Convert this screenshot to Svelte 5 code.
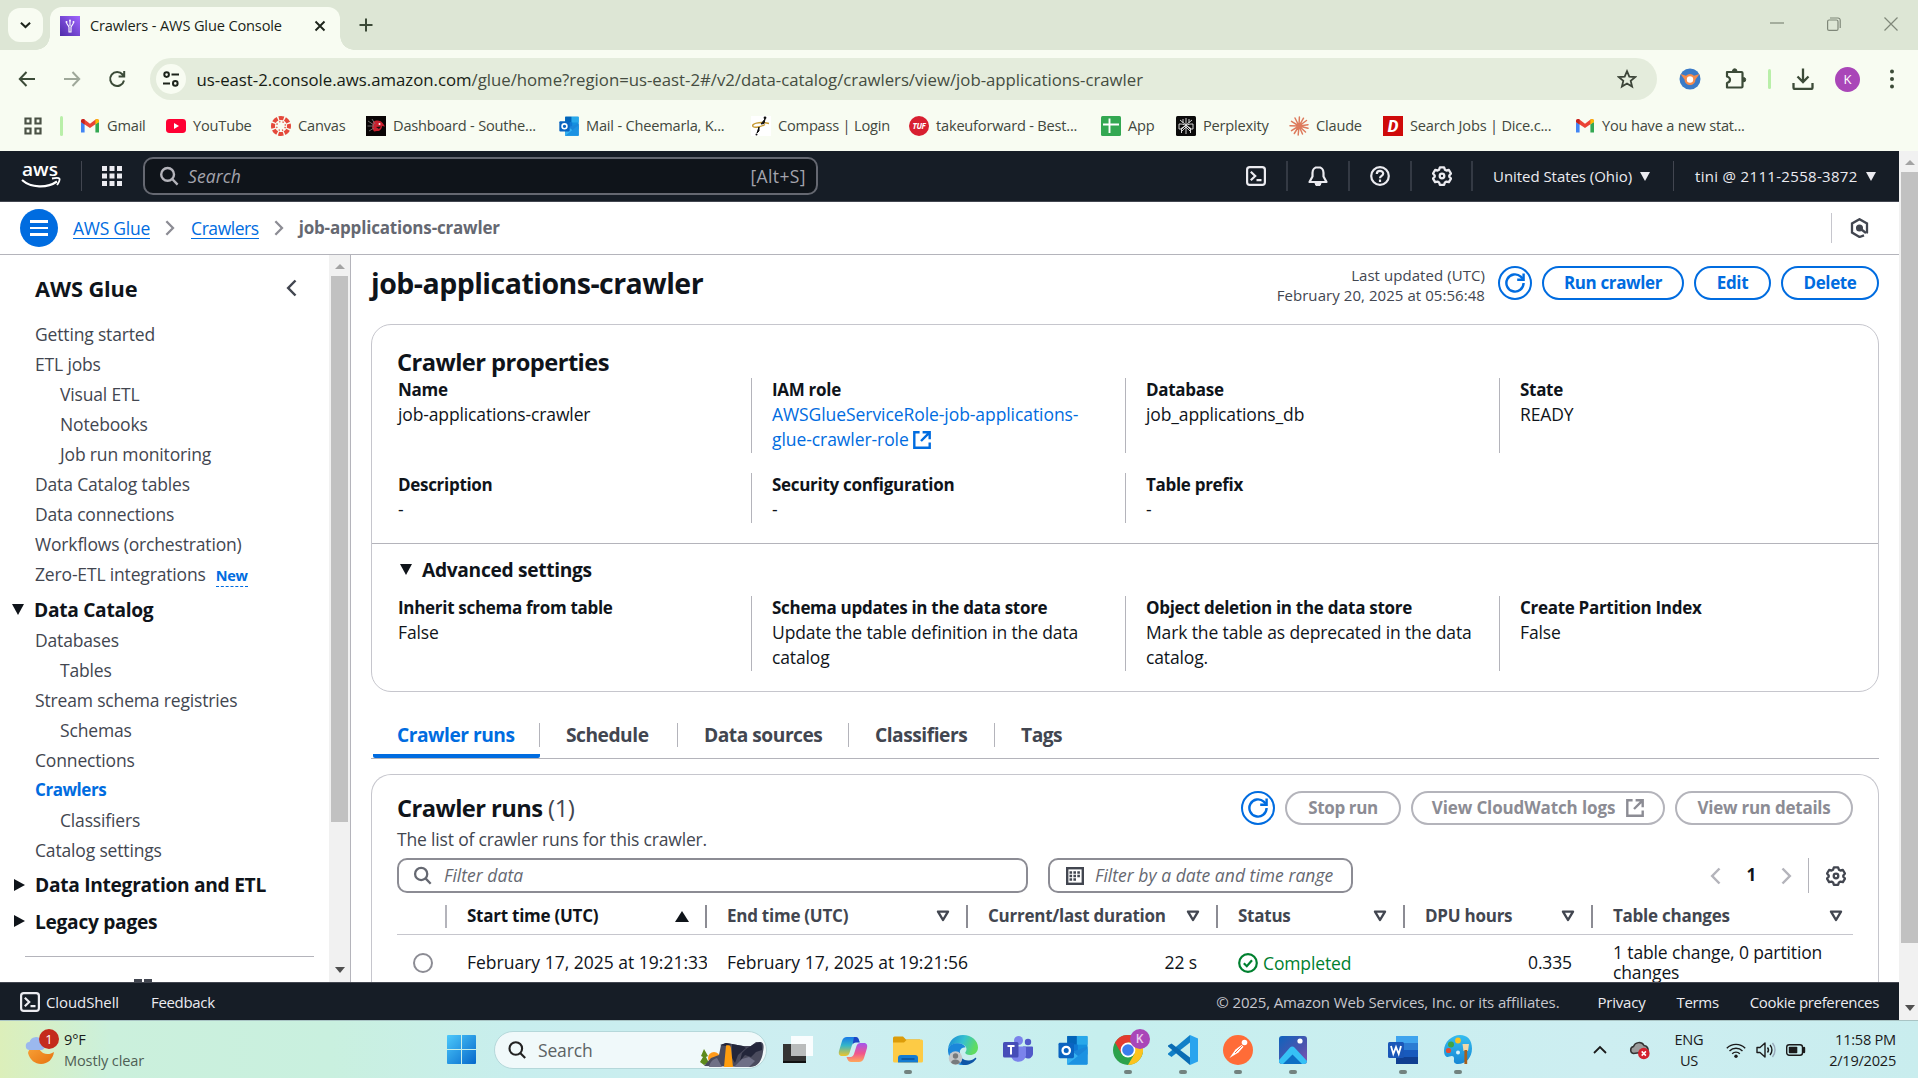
<script>
  const bookmarks = [
    { icon: 'gmail', label: 'Gmail' },
    { icon: 'youtube', label: 'YouTube' },
    { icon: 'canvas', label: 'Canvas' },
    { icon: 'dashboard', label: 'Dashboard - Southe...' },
    { icon: 'outlook', label: 'Mail - Cheemarla, K...' },
    { icon: 'compass', label: 'Compass | Login' },
    { icon: 'tuf', label: 'takeuforward - Best...' },
    { icon: 'app', label: 'App' },
    { icon: 'perplexity', label: 'Perplexity' },
    { icon: 'claude', label: 'Claude' },
    { icon: 'dice', label: 'Search Jobs | Dice.c...' },
    { icon: 'gmail', label: 'You have a new stat...' }
  ];

  const topLinks = [
    { label: 'Getting started' },
    { label: 'ETL jobs' },
    { label: 'Visual ETL', sub: true },
    { label: 'Notebooks', sub: true },
    { label: 'Job run monitoring', sub: true },
    { label: 'Data Catalog tables' },
    { label: 'Data connections' },
    { label: 'Workflows (orchestration)' },
    { label: 'Zero-ETL integrations', badge: 'New' }
  ];
  const catalogLinks = [
    { label: 'Databases' },
    { label: 'Tables', sub: true },
    { label: 'Stream schema registries' },
    { label: 'Schemas', sub: true },
    { label: 'Connections' },
    { label: 'Crawlers', active: true },
    { label: 'Classifiers', sub: true },
    { label: 'Catalog settings' }
  ];

  const advanced = [
    { label: 'Inherit schema from table', value: 'False' },
    { label: 'Schema updates in the data store', value: 'Update the table definition in the data catalog' },
    { label: 'Object deletion in the data store', value: 'Mark the table as deprecated in the data catalog.' },
    { label: 'Create Partition Index', value: 'False' }
  ];

  const tabs = ['Crawler runs', 'Schedule', 'Data sources', 'Classifiers', 'Tags'];
  const columns = ['Start time (UTC)', 'End time (UTC)', 'Current/last duration', 'Status', 'DPU hours', 'Table changes'];
  const apps = [
    { icon: 'taskview' },
    { icon: 'copilot' },
    { icon: 'explorer', open: true },
    { icon: 'edge' },
    { icon: 'teams' },
    { icon: 'outlook' },
    { icon: 'chrome', open: true },
    { icon: 'vscode', open: true },
    { icon: 'postman', open: true },
    { icon: 'photos', open: true },
    { icon: 'none' },
    { icon: 'word', open: true },
    { icon: 'paint', open: true }
  ];
</script>

{#snippet search()}
  <svg class="i20" viewBox="0 0 20 20" fill="none" stroke="currentColor" stroke-width="2.4"><circle cx="8.6" cy="8.4" r="6.4" /><path d="M13.2 13l5.4 5.6" /></svg>
{/snippet}

{#snippet refresh()}
  <svg class="i20" viewBox="0 0 20 20" fill="none" stroke="currentColor" stroke-width="2.4"><path d="M18.6 10a8.6 8.6 0 1 1-2.8-6.4l2 2.2" /><path d="M18.6 .6v6.2h-6.4" /></svg>
{/snippet}

{#snippet external()}
  <svg class="i18" viewBox="0 0 18 18" fill="none" stroke="currentColor" stroke-width="2.4"><path d="M6.6 1.3H1.3v15.4h15.4v-5.2" /><path d="M9.6 1.3h7.1v7M16.4 1.6L8 10" /></svg>
{/snippet}

{#snippet gear()}
  <svg class="i20" viewBox="0 0 20 20" fill="none" stroke="currentColor" stroke-width="2.3" stroke-linejoin="round"><path d="M7.9 1.3h4.2l.8 2.4 1.5.8 2.5-.5 2.1 3.5-1.7 1.9v1.3l1.7 1.9-2.1 3.5-2.5-.5-1.5.8-.8 2.4H7.900l-.8-2.400-1.500-.8-2.500.5L1 12.600l1.700-1.900V9.400L1 7.500 3.100 4l2.500.5 1.500-.8z" /><circle cx="10" cy="10" r="2.300" /></svg>
{/snippet}

{#snippet shell()}
  <svg class="i20" viewBox="0 0 20 20" fill="none" stroke="currentColor" stroke-width="2.2"><rect x="1.1" y="1.1" width="17.8" height="17.8" rx="2.600" /><path d="M4.800 5.800l4.400 4.200-4.400 4.200M10.500 14.200h5" /></svg>
{/snippet}

{#snippet chevron(dir)}
  <svg class="chev {dir}" viewBox="0 0 11 18" fill="none" stroke="currentColor" stroke-width="2.500"><path d="M1.500 1.500L8.800 9l-7.300 7.500" /></svg>
{/snippet}

{#snippet sort()}
  <svg class="sort" viewBox="0 0 14 12" fill="none" stroke="currentColor" stroke-width="2.400" stroke-linejoin="round"><path d="M2 1.600h10L7 10z" /></svg>
{/snippet}

{#snippet outlook()}
  <rect x="9" y="1" width="21" height="20" rx="1.500" fill="#1490df" /><path d="M9 1h10v9H9z" fill="#0364b8" /><path d="M19 1h11v9H19z" fill="#28a8ea" /><path d="M9 10h11v9H9z" fill="#0f78d4" /><path d="M9 19l21-7v17.500a1 1 0 0 1-1 1H10a1 1 0 0 1-1-1z" fill="#1a86d9" /><path d="M9 13l21 16.500a1 1 0 0 1-1 1H9z" fill="#35b1f1" /><path d="M9 30.500L30 14v15.500a1 1 0 0 1-1 1z" fill="#1c92e2" /><rect x="0" y="8" width="16" height="16" rx="1.500" fill="#0a63c0" /><circle cx="8" cy="16" r="3.800" fill="none" stroke="#fff" stroke-width="2.400" />
{/snippet}

{#snippet bookmarkIcon(name)}
  {#if name === 'gmail'}
    <svg class="i20" viewBox="0 0 20 20"><path d="M1 6v10.500h3.600V8z" fill="#4285f4" /><path d="M19 6v10.500h-3.600V8z" fill="#34a853" /><path d="M1 5.200C1 3 3.300 2.500 4.800 3.700L10 7.700V12L1 5.900z" fill="#ea4335" /><path d="M19 5.200c0-2.200-2.300-2.700-3.800-1.500L10 7.700V12l5.400-3.800z" fill="#ea4335" /><path d="M15.400 3.600c1.600-1.100 3.600-.4 3.600 1.600V6l-3.600 2.600z" fill="#fbbc04" /><path d="M1 5.900l3.600 2.600v-5C3 2.500 1 3.400 1 5.200z" fill="#c5221f" /></svg>
  {:else if name === 'youtube'}
    <svg class="i20" viewBox="0 0 20 20"><rect y="3" width="20" height="14" rx="3.400" fill="#f03" /><path d="M8 7v6l5-3z" fill="#fff" /></svg>
  {:else if name === 'canvas'}
    <svg class="i20" viewBox="0 0 20 20"><circle cx="10" cy="10" r="8" fill="none" stroke="#e4493b" stroke-width="4" stroke-dasharray="4.900 1.383" stroke-dashoffset="2.400" /><circle cx="10" cy="10" r="4.400" fill="none" stroke="#e4493b" stroke-width="1.300" stroke-dasharray="1.300 2.156" stroke-dashoffset="-1" /></svg>
  {:else if name === 'dashboard'}
    <svg class="i20" viewBox="0 0 20 20"><rect width="20" height="20" fill="#0a0506" /><path d="M7 6c4-2.500 8-1.500 10 1.500l2 3-3-.5c0 3-2.500 5.500-5 5l-3 .5L6 12z" fill="#c8202f" /><path d="M2 5l6 4M1.500 10H8M3 15l5-3M6 3l3 5" stroke="#777" stroke-width=".9" /><circle cx="13.500" cy="8" r="1" fill="#fff" /><path d="M10 11l5-.5-2 2.500z" fill="#111" /></svg>
  {:else if name === 'outlook'}
    <svg class="i20" viewBox="0 0 30 31">{@render outlook()}</svg>
  {:else if name === 'compass'}
    <svg class="i20" viewBox="0 0 20 20"><rect width="20" height="20" fill="#fff" /><path d="M18 7.500C8 5 0 8 2 10.500c2 1.500 8 .5 12-2" fill="none" stroke="#c79a33" stroke-width="1.400" /><path d="M14 3l-4 5 3-.5zM8 11l-2 6 2-2z" fill="#111" stroke="#111" /><circle cx="14" cy="1.800" r="1.400" fill="#111" /><circle cx="5.500" cy="18.500" r="1" fill="#111" /></svg>
  {:else if name === 'tuf'}
    <span class="tuf">TUF</span>
  {:else if name === 'app'}
    <svg class="i20" viewBox="0 0 20 20"><rect width="20" height="20" rx="1.500" fill="#33a852" /><path d="M8.500 2.500v14.500M2 8.500h16" stroke="#fff" stroke-width="1.900" /></svg>
  {:else if name === 'perplexity'}
    <svg class="i20" viewBox="0 0 20 20" fill="none" stroke="#e8e8e8" stroke-width=".9"><rect width="20" height="20" rx="1.500" fill="#0b0b0b" stroke="none" /><path d="M10 2v16M4 4l6 5 6-5M3 8c3 0 5 0 7 2 2-2 4-2 7-2M3 8v5h3l4-4 4 4h3V8M5.500 17v-5l4.500-2.500 4.500 2.500v5M7 3v4M13 3v4M10 11l-4 4M10 11l4 4" /></svg>
  {:else if name === 'claude'}
    <svg class="i20" viewBox="0 0 20 20" stroke="#dd7a5c" stroke-width="1.500" stroke-linecap="round"><path d="M10 10L10.400 1M10 10L14.500 2.200M10 10L17.500 4.500M10 10L19 8.700M10 10l9 2.300M10 10l6.500 6M10 10l3.500 8M10 10l-.8 9M10 10l-4.700 7.500M10 10l-7.500 4.700M10 10l-9-.3M10 10L2.500 5.300M10 10L6 2" /></svg>
  {:else if name === 'dice'}
    <span class="dice">D</span>
  {/if}
{/snippet}

{#snippet appIcon(name)}
  {#if name === 'taskview'}
    <svg class="i30" viewBox="0 0 30 30"><rect x="0" y="9" width="23" height="19" fill="#343434" /><path d="M0 26h23v2H0z" fill="#111" /><rect x="8" y="1" width="22" height="20" fill="#fff" fill-opacity=".88" /><path d="M8 9h15v12H8z" fill="#b9bcbc" /></svg>
  {:else if name === 'copilot'}
    <svg class="i30" viewBox="0 0 30 30"><defs><linearGradient id="cp1" x1="0" y1="0" x2="0" y2="1"><stop offset="0" stop-color="#1779e8" /><stop offset=".45" stop-color="#35b6c8" /><stop offset="1" stop-color="#f0c52a" /></linearGradient><linearGradient id="cp2" x1="0" y1="0" x2="0" y2="1"><stop offset="0" stop-color="#a355ee" /><stop offset=".55" stop-color="#f0568c" /><stop offset="1" stop-color="#ffa85a" /></linearGradient></defs><path d="M9 2h8c3 0 3.500 3 4.500 5h-4c-2 0-3 1.500-3.500 3l-2.500 8c-.6 2-2 3-4 3H4c-3 0-3.600-2.500-3-5L4 6c.8-2.600 2.500-4 5-4z" fill="url(#cp1)" /><path d="M21 27h-8c-3 0-3.500-3-4.500-5h4c2 0 3-1.500 3.500-3l2.500-8c.6-2 2-3 4-3H26c3 0 3.600 2.500 3 5l-3 10c-.8 2.600-2.500 4-5 4z" fill="url(#cp2)" /><path d="M16 2h2c2.500 0 3 3 3.800 5.600H18c-2 0-3 1-3.500 2.500z" fill="#1b45c4" /></svg>
  {:else if name === 'explorer'}
    <svg class="i30" viewBox="0 0 30 30"><path d="M0 3a1.500 1.500 0 0 1 1.500-1.500H10l3 3h14V12H0z" fill="#dc9c0a" /><path d="M0 7.500h11l3-3h14.500A1.500 1.500 0 0 1 30 6v20a1.500 1.500 0 0 1-1.500 1.500h-27A1.500 1.500 0 0 1 0 26z" fill="#fdcb45" /><path d="M5 27.500V23a3 3 0 0 1 3-3h14a3 3 0 0 1 3 3v4.500z" fill="#147bd1" /><path d="M8.500 24h13" stroke="#0a4f94" stroke-width="1.500" /></svg>
  {:else if name === 'edge'}
    <svg class="i30" viewBox="0 0 30 30"><defs><linearGradient id="eg" x1="0" y1="0" x2="1" y2=".3"><stop offset="0" stop-color="#1683d8" /><stop offset=".55" stop-color="#36c1cf" /><stop offset="1" stop-color="#5fdc61" /></linearGradient></defs><path d="M0 14C1 5.500 7 0 15 0c9 0 15 6 15 12.500 0 5-4 7.500-8 7.500-3 0-4.800-1-4.800-2.200 0-.8 1.300-1.500 1.300-3.800 0-3-3.500-5.500-7.500-5.500C5 8.500 1 10.500 0 14z" fill="url(#eg)" /><path d="M0 14C1.500 9.800 5.500 8.300 10 8.300c4 0 6.500 2 7.500 4-5 0-7 4.700-5.500 9 1.500 4 4 6.700 8 7.900A15 15 0 0 1 0 14z" fill="#1b87da" /><path d="M12 16c-1.500 6 3.500 10 9 9.500 2.500-.2 4.500-1.200 6-2.500 1-.8 1.700 0 1 1.200A15 15 0 0 1 15 30C10 27 8 20 12 16z" fill="#0f55a6" /><circle cx="7.500" cy="23" r="6.800" fill="#c3c7ca" /><circle cx="7.500" cy="21" r="2.700" fill="#777a7c" /><path d="M3 27.500c.8-4 8-4 9 0-2 2.500-7 2.500-9 0z" fill="#777a7c" /></svg>
  {:else if name === 'teams'}
    <svg class="i30" viewBox="0 0 30 30"><circle cx="25" cy="7" r="3.200" fill="#5059c9" /><path d="M20 11.500h9a1 1 0 0 1 1 1V18a5 5 0 0 1-8 4.500z" fill="#5059c9" /><circle cx="15.500" cy="5.500" r="4.500" fill="#7b83eb" /><path d="M9 11.500h13a1 1 0 0 1 1 1v8A7.700 7.700 0 0 1 8 21z" fill="#7b83eb" /><rect y="7" width="15.500" height="15.500" rx="1.500" fill="#464eb8" /><path d="M4.500 11h7M8 11v8.500" stroke="#fff" stroke-width="2" /></svg>
  {:else if name === 'outlook'}
    <svg class="i30" viewBox="0 0 30 31">{@render outlook()}</svg>
  {:else if name === 'chrome'}
    <span class="badged">
      <svg class="i30" viewBox="0 0 30 30"><circle cx="15" cy="15" r="15" fill="#2ba24c" /><path d="M2 7.500A15 15 0 0 1 28 7.500H15l-6.500 11.200z" fill="#e33b2e" /><path d="M28 7.500A15 15 0 0 1 15 30l6.500-11.200L15 7.500z" fill="#fcc31e" /><circle cx="15" cy="15" r="7.400" fill="#fff" /><circle cx="15" cy="15" r="5.800" fill="#3b7ded" /></svg>
      <span class="kbadge">K</span>
    </span>
  {:else if name === 'vscode'}
    <svg class="i30" viewBox="0 0 30 30"><path d="M22 7.500L3.500 22 0 19.500v-1L22 0z" fill="#1180c8" /><path d="M22 22.500L3.500 8.500 0 10.500v1L22 30z" fill="#0a6cb4" /><path d="M22 0l8 3.500v23L22 30z" fill="#2aa4ee" /></svg>
  {:else if name === 'postman'}
    <svg class="i30" viewBox="0 0 30 30"><circle cx="15" cy="15" r="15" fill="#ff6c37" /><path d="M6.500 23l6-8.500 6-4.500 2 1.800-5 5.700z" fill="#fff" /><circle cx="21.500" cy="7.500" r="2.800" fill="#fff" /><path d="M12 18l7-7" stroke="#ff6c37" /></svg>
  {:else if name === 'photos'}
    <svg class="i28" viewBox="0 0 28 28"><defs><linearGradient id="ph" x1="0" y1="0" x2="1" y2="1"><stop offset="0" stop-color="#0f63bd" /><stop offset=".6" stop-color="#4b55ae" /><stop offset="1" stop-color="#8454b5" /></linearGradient></defs><rect width="28" height="28" rx="3" fill="url(#ph)" /><path d="M0 24l11-12.500a3 3 0 0 1 4.500 0L28 25a3 3 0 0 1-3 3H3a3 3 0 0 1-3-4z" fill="#36c1f5" /><path d="M4 28l9.500-9.500L23 28z" fill="#0d6fc4" /><circle cx="21" cy="5" r="2.600" fill="#fff" /></svg>
  {:else if name === 'word'}
    <svg class="i30" viewBox="0 0 30 30"><path d="M8 1h22v7.500H8z" fill="#3fa4ee" /><path d="M8 8h22v7.500H8z" fill="#2b7cd3" /><path d="M8 15h22v7H8z" fill="#185abd" /><path d="M8 22h22v7H8z" fill="#103f91" /><rect y="7" width="16" height="16" rx="1.500" fill="#1a57b8" /><path d="M3 11l2.300 8L8 12l2.700 7L13 11" fill="none" stroke="#fff" stroke-width="1.800" /></svg>
  {:else if name === 'paint'}
    <svg class="i30" viewBox="0 0 30 30"><defs><linearGradient id="pa" x1="0" y1="0" x2="0" y2="1"><stop offset="0" stop-color="#35bdf0" /><stop offset="1" stop-color="#1787d4" /></linearGradient></defs><path d="M17 0C9 0 1 7 1 15.500c0 5.500 2.500 7.500 5.500 6 2.500-1.300 5-.5 4.500 3-.6 3 1 4.500 4 4.500 8 0 14-6.500 14-15.500C29 5 24.500 0 17 0z" fill="url(#pa)" /><circle cx="8" cy="9.500" r="3" fill="#3fa445" /><circle cx="15" cy="5.500" r="2.900" fill="#f6c324" /><circle cx="5.500" cy="15.500" r="2.600" fill="#e54b31" /><circle cx="15" cy="17.500" r="2" fill="#d6f2fa" /><path d="M19.500 9h6.500l-1 7h-4.500z" fill="#f0d7a8" /><path d="M22.800 15v14" stroke="#a7601c" stroke-width="2.800" /></svg>
  {/if}
{/snippet}

<div class="screen">
  <div class="strip">
    <div class="tabsearch"><svg viewBox="0 0 12 8" class="tiny" fill="none" stroke="#1d241b" stroke-width="2.200"><path d="M1 1.500l5 4.700 5-4.700" /></svg></div>
    <div class="browser-tab">
      <svg class="i20" viewBox="0 0 20 20"><defs><linearGradient id="gl" x1="0" y1="1" x2="1" y2="0"><stop offset="0" stop-color="#4d2aa8" /><stop offset="1" stop-color="#a166ff" /></linearGradient></defs><rect width="20" height="20" fill="url(#gl)" /><path d="M6.500 7l2.500 4v5h2v-5l2.500-4M10 5v5" fill="none" stroke="#fff" stroke-width="1.100" /><circle cx="6.500" cy="6" r="1" fill="#fff" /><circle cx="13.500" cy="6" r="1" fill="#fff" /><circle cx="10" cy="4.500" r=".9" fill="#fff" /></svg>
      <span class="tab-title">Crawlers - AWS Glue Console</span>
      <svg class="x" viewBox="0 0 12 12" stroke="#1d241b" stroke-width="1.900"><path d="M1.500 1.500l9 9M10.500 1.500l-9 9" /></svg>
    </div>
    <svg class="plus" viewBox="0 0 14 14" stroke="#3c4a38" stroke-width="2"><path d="M7 .5v13M.5 7h13" /></svg>
    <div class="winbtns">
      <svg viewBox="0 0 14 14" fill="none" stroke="#7f8779" stroke-width="1.200"><path d="M0 6h14" /></svg>
      <svg viewBox="0 0 14 14" fill="none" stroke="#7f8779" stroke-width="1.200"><rect x=".6" y="3" width="10.400" height="10.400" rx="1.500" /><path d="M3 1h8a2.200 2.200 0 0 1 2.200 2.200V11" /></svg>
      <svg viewBox="0 0 14 14" fill="none" stroke="#7f8779" stroke-width="1.200"><path d="M.5.500l13 13M13.500.500l-13 13" /></svg>
    </div>
  </div>

  <div class="toolbar">
    <div class="nav">
      <svg viewBox="0 0 18 18" fill="none" stroke="#3c4b38" stroke-width="2"><path d="M17 9H2M8.500 2L1.800 9l6.700 7" /></svg>
      <svg viewBox="0 0 18 18" fill="none" stroke="#9fa89a" stroke-width="2"><path d="M1 9h15M9.500 2l6.700 7-6.700 7" /></svg>
      <svg viewBox="0 0 18 18" fill="none" stroke="#3c4b38" stroke-width="2"><path d="M16 10.500A7 7 0 1 1 14.600 4.500L16 6.300M16.200 1v5.600h-5.600" /></svg>
    </div>
    <div class="url">
      <span class="site"><svg viewBox="0 0 16 16" fill="none" stroke="#1d241b" stroke-width="2"><circle cx="3.600" cy="3.600" r="2.300" /><path d="M8.500 3.600H16M0 12.400h7" /><circle cx="12.300" cy="12.400" r="2.300" /></svg></span>
      <span class="address"><b>us-east-2.console.aws.amazon.com</b>/glue/home?region=us-east-2#/v2/data-catalog/crawlers/view/job-applications-crawler</span>
      <svg class="star" viewBox="0 0 20 20" fill="none" stroke="#3d4539" stroke-width="1.800"><path d="M10 2.200l2.300 5.400 5.800.5-4.400 3.800 1.400 5.700-5.100-3.100-5.100 3.100 1.400-5.700L1.900 8.100l5.800-.5z" /></svg>
    </div>
    <div class="exts">
      <svg viewBox="0 0 22 22"><circle cx="11" cy="11" r="10.500" fill="#3a7bc8" /><path d="M1.500 6l5.500 1.800a5.500 5.500 0 0 1 8 0L20.500 6l-4 5.500a5.500 5.500 0 1 1-11 0z" fill="#f58a4b" /><circle cx="11" cy="11.500" r="3.200" fill="#fff" /></svg>
      <svg viewBox="0 0 22 22" fill="none" stroke="#3c4b38" stroke-width="2.200" stroke-linejoin="round"><path d="M2 4h14.500a1 1 0 0 1 1 1v13.500a1 1 0 0 1-1 1H2v-4.500q3-1 3-3.300T2 8.500z" /><path d="M7.500 3a2.200 2.200 0 0 1 4.400 0zM18.500 9.500a2.200 2.200 0 0 1 0 4.400z" fill="#3c4b38" stroke-width="1" /></svg>
      <i class="greenbar"></i>
      <svg viewBox="0 0 22 22" fill="none" stroke="#3c4b38" stroke-width="2.300"><path d="M11 .5v13M5.500 8.500L11 14l5.500-5.500M1.500 15v4.500a1.500 1.500 0 0 0 1.500 1.500h16a1.500 1.500 0 0 0 1.500-1.500V15" /></svg>
      <span class="avatar">K</span>
      <svg viewBox="0 0 22 22" fill="#3c4b38"><circle cx="11" cy="3.500" r="2" /><circle cx="11" cy="11" r="2" /><circle cx="11" cy="18.500" r="2" /></svg>
    </div>
  </div>

  <div class="bookmarks">
    <svg class="i20" viewBox="0 0 20 20" fill="none" stroke="#4a5145" stroke-width="2.200"><path d="M2.500 2.500h5v5h-5zM12.500 2.500h5v5h-5zM2.500 12.500h5v5h-5zM12.500 12.500h5v5h-5z" /></svg>
    <i class="greenbar"></i>
    {#each bookmarks as b}
      <span class="bm">{@render bookmarkIcon(b.icon)}<span class="bmlabel">{b.label}</span></span>
    {/each}
  </div>

  <div class="viewport">
    <div class="page">
      <header>
        <svg class="awslogo" viewBox="0 0 40 30"><text x="1" y="16.800" textLength="36" lengthAdjust="spacingAndGlyphs">aws</text><path d="M1 21c9 8 25 8.500 35 1.500" fill="none" stroke="#fff" stroke-width="2.200" /><path d="M31 19.500c4-.8 7-.6 7.500.2s-.5 4-2.500 6.300" fill="none" stroke="#fff" stroke-width="1.800" /></svg>
        <i class="sep"></i>
        <svg class="i20 waffle" viewBox="0 0 20 20" fill="#ebebf0"><path d="M0 0h5v5H0zM7.500 0h5v5h-5zM15 0h5v5h-5zM0 7.500h5v5H0zM7.500 7.500h5v5h-5zM15 7.500h5v5h-5zM0 15h5v5H0zM7.500 15h5v5h-5zM15 15h5v5h-5z" /></svg>
        <div class="awssearch">{@render search()}<em>Search</em><span>[Alt+S]</span></div>
        <div class="hicons">
          <span>{@render shell()}</span>
          <span><svg class="i20" viewBox="0 0 20 20" fill="none" stroke="currentColor" stroke-width="2.200" stroke-linejoin="round"><path d="M10 1.200c-3.300 0-5.500 2.300-5.500 5.500v3.800l-3 5.500h17l-3-5.500V6.700c0-3.200-2.200-5.500-5.500-5.500z" /><path d="M7 17h6a3 3 0 0 1-6 0z" fill="currentColor" stroke-width="1" /></svg></span>
          <span><svg class="i20" viewBox="0 0 20 20" fill="none" stroke="currentColor" stroke-width="2.200"><circle cx="10" cy="10" r="8.800" /><path d="M6.800 8c0-4.200 6.400-4 6.400-.5 0 2.400-3.200 2.300-3.200 4.800M10 13.500V16" /></svg></span>
          <span>{@render gear()}</span>
        </div>
        <div class="hmenu region">United States (Ohio)<i class="caret"></i></div>
        <div class="hmenu account">tini @ 2111-2558-3872<i class="caret"></i></div>
      </header>

      <div class="crumbs">
        <span class="burger"><i></i><i></i><i></i></span>
        <a href="#glue">AWS Glue</a>
        {@render chevron('right')}
        <a class="second-crumb" href="#crawlers">Crawlers</a>
        {@render chevron('right')}
        <b>job-applications-crawler</b>
        <span class="hex"><svg viewBox="0 0 18 20" fill="none" stroke="#424650" stroke-width="2.300"><path d="M13.500 17.300L9 19 1.500 14.500v-9L9 1.200l7.500 4.300v9l-.7.500" /><circle cx="9" cy="10" r="2.400" fill="#424650" /><path d="M9 10l6.500 5" /></svg></span>
      </div>

      <div class="body">
        <nav class="side">
          <div class="sidehead"><b>AWS Glue</b>{@render chevron('left')}</div>
          {#each topLinks as l}
            <div class="link" class:sub={l.sub}>{l.label}{#if l.badge}<span class="new">{l.badge}</span>{/if}</div>
          {/each}
          <div class="group first"><i class="down"></i>Data Catalog</div>
          {#each catalogLinks as l}
            <div class="link" class:sub={l.sub} class:active={l.active}>{l.label}</div>
          {/each}
          <div class="group second"><i class="side-arrow"></i>Data Integration and ETL</div>
          <div class="group third"><i class="side-arrow"></i>Legacy pages</div>
          <hr />
          <div class="peek"><i></i><i></i></div>
        </nav>
        <div class="sidescroll"><i class="up"></i><div class="thumb"></div><i class="dn"></i></div>

        <main>
          <div class="titlebar">
            <h1>job-applications-crawler</h1>
            <div class="updated">Last updated (UTC)<br />February 20, 2025 at 05:56:48</div>
            <button class="round">{@render refresh()}</button>
            <button class="run">Run crawler</button>
            <button class="edit">Edit</button>
            <button class="del">Delete</button>
          </div>

          <section class="card props">
            <h2>Crawler properties</h2>
            <div class="grid">
              <div><b>Name</b>job-applications-crawler</div>
              <div><b>IAM role</b><span class="blue">AWSGlueServiceRole-job-applications-<br />glue-crawler-role {@render external()}</span></div>
              <div><b>Database</b>job_applications_db</div>
              <div><b>State</b>READY</div>
            </div>
            <div class="grid three">
              <div><b>Description</b>-</div>
              <div><b>Security configuration</b>-</div>
              <div><b>Table prefix</b>-</div>
            </div>
            <div class="adv">
              <h3><i class="down"></i>Advanced settings</h3>
              <div class="grid">
                {#each advanced as a}
                  <div><b>{a.label}</b>{a.value}</div>
                {/each}
              </div>
            </div>
          </section>

          <div class="tabs">
            {#each tabs as t, i}
              <span class:on={i === 0}>{t}</span>
            {/each}
          </div>

          <section class="card runs">
            <div class="runshead">
              <h2>Crawler runs <small>(1)</small></h2>
              <button class="round">{@render refresh()}</button>
              <button class="off stop">Stop run</button>
              <button class="off logs">View CloudWatch logs {@render external()}</button>
              <button class="off details">View run details</button>
            </div>
            <p>The list of crawler runs for this crawler.</p>
            <div class="filters">
              <div class="field main">{@render search()}<em>Filter data</em></div>
              <div class="field date"><svg class="i18" viewBox="0 0 18 18"><rect x="1.200" y="1.200" width="15.600" height="15.600" fill="none" stroke="#424650" stroke-width="2.400" /><path d="M3.500 5.500h11M3.500 9h11M3.500 12.500h7.500" stroke="#424650" stroke-width="2.400" stroke-dasharray="2.600 1.300" /></svg><em>Filter by a date and time range</em></div>
              <div class="pager">{@render chevron('left')}<b>1</b>{@render chevron('right')}<span class="pref">{@render gear()}</span></div>
            </div>
            <div class="thead">
              <span></span>
              {#each columns as c, i}
                <span class="th" class:sorted={i === 0}>{c}{#if i === 0}<i class="asc"></i>{:else}{@render sort()}{/if}</span>
              {/each}
            </div>
            <div class="trow">
              <span class="radiocell"><i class="radio"></i></span>
              <span class="clip">February 17, 2025 at 19:21:33</span>
              <span class="clip">February 17, 2025 at 19:21:56</span>
              <span class="num">22 s</span>
              <span class="ok"><svg class="i20" viewBox="0 0 20 20" fill="none" stroke="currentColor" stroke-width="2.200"><circle cx="10" cy="10" r="8.800" /><path d="M5.800 10.200l3 3 5.200-6" /></svg>Completed</span>
              <span class="num">0.335</span>
              <span class="changes">1 table change, 0 partition changes</span>
            </div>
          </section>
        </main>
      </div>

      <footer>
        {@render shell()}<span class="cs">CloudShell</span><span class="fb">Feedback</span>
        <span class="copy">© 2025, Amazon Web Services, Inc. or its affiliates.</span>
        <span class="f1">Privacy</span><span class="f2">Terms</span><span class="f3">Cookie preferences</span>
      </footer>
    </div>
    <div class="pagescroll"><i class="up"></i><div class="thumb"></div><i class="dn"></i></div>
  </div>

  <div class="taskbar">
    <div class="weather">
      <span class="badged">
        <svg class="wicon" viewBox="0 0 34 34"><defs><linearGradient id="mo" x1="0" y1="0" x2="1" y2="1"><stop offset="0" stop-color="#f9a43a" /><stop offset="1" stop-color="#e6720f" /></linearGradient></defs><path d="M3 20c2 7 7 11 13 11 7 0 12-5 13-12-3 2-7 3-11 1-3-2-5-5-5-8-4 0-9 3-10 8z" fill="url(#mo)" /><path d="M5 17a4 4 0 0 1-.5-8 6.500 6.500 0 0 1 12-1.500A5 5 0 0 1 17 17z" fill="#9bb8ee" /></svg>
        <span class="wbadge">1</span>
      </span>
      <div><div class="temp">9°F</div><div class="cond">Mostly clear</div></div>
    </div>
    <svg class="winlogo" viewBox="0 0 29 29"><defs><linearGradient id="wi" gradientUnits="userSpaceOnUse" x1="0" y1="0" x2="29" y2="29"><stop offset="0" stop-color="#4cc9fb" /><stop offset="1" stop-color="#0568cb" /></linearGradient></defs><path d="M1 0h13v14H0V1a1 1 0 0 1 1-1zM15 0h13a1 1 0 0 1 1 1v13H15zM0 15h14v14H1a1 1 0 0 1-1-1zM15 15h14v13a1 1 0 0 1-1 1H15z" fill="url(#wi)" /></svg>
    <div class="tsearch">
      <svg class="mag" viewBox="0 0 18 18" fill="none" stroke="#222" stroke-width="2.100"><circle cx="7.800" cy="7.500" r="6.300" /><path d="M12.200 12l5 5" /></svg>
      <span>Search</span>
      <svg class="scene" viewBox="0 0 64 26"><path d="M4 8l4 7-2 1 3 6-5 2-4-3 3-5-2-1z" fill="#5d8a1c" /><circle cx="14" cy="17" r="6" fill="#ff9a1a" /><path d="M4 25l7-8 8-3 2-10 5-2 6 1 11 2 8 0 5-4 5 0c3 1 3 5 2 10-1 8-5 15-12 15z" fill="#4a4b5d" /><path d="M32 3l11 2 3 2-8 7-3 8-3-5zM46 8l8-5 6-2c2 1 2 4 2 8l-6 2-5 5-6-2-5 6 2-8z" fill="#23263a" /><path d="M20 4l6-2 6 1-6 2z" fill="#23263a" /><path d="M26 4.500c3-1 5 0 5 3l2 18.500h-9z" fill="#ff9d0d" /><path d="M9 26c1-5 4-8 8-9l5 9zM34 26l8-8 7-2 6 4-6 6z" fill="#6f7086" /></svg>
    </div>
    <div class="apps">
      {#each apps as a}
        <span class="app" class:open={a.open}>{@render appIcon(a.icon)}</span>
      {/each}
    </div>
    <div class="tray">
      <svg class="tchev" viewBox="0 0 14 9" fill="none" stroke="#1b1b1b" stroke-width="1.800"><path d="M1 8l6-6 6 6" /></svg>
      <svg class="cloud" viewBox="0 0 21 20"><path d="M4.500 13.500C1 13 .5 7.500 4.500 6.500 6 2 12.500 1 15 5.500c3 .5 4.500 3 4 6z" fill="#9b9b9b" stroke="#333" stroke-width="1.500" /><circle cx="14.800" cy="13.500" r="5.800" fill="#d3222e" /><path d="M12.700 11.400l4.200 4.200M16.900 11.400l-4.200 4.200" stroke="#fff" stroke-width="1.500" /></svg>
      <div class="lang">ENG<br />US</div>
      <svg class="i20 wifi" viewBox="0 0 20 20" fill="none" stroke="#1b1b1b" stroke-width="1.400"><path d="M.8 8.200a13 13 0 0 1 18.400 0M3.500 11a9.200 9.200 0 0 1 13 0M6.200 13.700a5.400 5.400 0 0 1 7.600 0" /><circle cx="10" cy="16.200" r="1.700" fill="#1b1b1b" stroke="none" /></svg>
      <svg class="i20 vol" viewBox="0 0 20 20" fill="none" stroke="#1b1b1b" stroke-width="1.400" stroke-linejoin="round"><path d="M1 7.500h3L9 3v14l-5-4.500H1zM11.500 7.500a4 4 0 0 1 0 5M14 5a7.500 7.500 0 0 1 0 10" /><path d="M16.500 3a11 11 0 0 1 0 14" stroke="#9ab" /></svg>
      <svg class="i20 bat" viewBox="0 0 20 20"><rect x=".7" y="4.700" width="15.800" height="10.600" rx="2.500" fill="none" stroke="#1b1b1b" stroke-width="1.400" /><rect x="2.800" y="6.800" width="8.500" height="6.400" rx=".8" fill="#1b1b1b" /><path d="M18 8v4" stroke="#1b1b1b" stroke-width="2.400" stroke-linecap="round" /></svg>
      <div class="clock">11:58 PM<br />2/19/2025</div>
    </div>
  </div>
</div>

<style>
  :global(body) { margin: 0; overflow: hidden; }
  .screen { width: 1918px; height: 1078px; display: flex; flex-direction: column; overflow: hidden; background: #fff; font-family: 'Open Sans', 'Noto Sans', sans-serif; font-size: 17.5px; letter-spacing: -.13px; color: #0f141a; }
  .screen, .screen * { box-sizing: border-box; }
  svg { display: block; flex: none; }
  .i20 { width: 20px; height: 20px; }
  .i18 { width: 18px; height: 18px; }
  .i30 { width: 30px; height: 30px; }
  .i28 { width: 28px; height: 28px; }
  i { display: block; flex: none; }

  /* browser chrome */
  .strip { height: 50px; background: #dde6d5; display: flex; align-items: flex-start; padding: 7px 16px 0 8px; flex: none; }
  .tabsearch { width: 35px; height: 34px; margin-top: 1px; border-radius: 12px; background: #f8fcf2; display: grid; place-items: center; }
  .tiny { width: 11px; height: 8px; }
  .browser-tab { margin-left: 7px; width: 290px; height: 43px; border-radius: 12px 12px 0 0; background: #f8fcf2; display: flex; align-items: center; padding: 0 14px 6px 10px; position: relative; }
  .browser-tab::before, .browser-tab::after { content: ''; position: absolute; bottom: 0; width: 14px; height: 14px; }
  .browser-tab::before { left: -14px; background: radial-gradient(circle at 0 0, transparent 13.5px, #f8fcf2 14px); }
  .browser-tab::after { right: -14px; background: radial-gradient(circle at 100% 0, transparent 13.5px, #f8fcf2 14px); }
  .tab-title { margin: -1px 0 0 10px; font-size: 14.6px; letter-spacing: -.15px; color: #1a1f18; flex: 1; }
  .x { width: 12px; height: 12px; }
  .plus { width: 14px; height: 14px; margin: 11px 0 0 19px; }
  .winbtns { margin: 10px 4px 0 auto; display: flex; gap: 43px; }
  .winbtns svg { width: 14px; height: 14px; }
  .toolbar { height: 58px; flex: none; background: #f8fcf2; display: flex; align-items: center; padding: 0 15px 0 18px; }
  .nav { display: flex; gap: 27px; width: 132px; }
  .nav svg { width: 18px; height: 18px; }
  .url { width: 1507px; height: 42px; border-radius: 21px; background: #e4ecdc; display: flex; align-items: center; padding: 0 20px 0 6px; }
  .site { width: 30px; height: 30px; border-radius: 50%; background: #f8fcf2; display: grid; place-items: center; }
  .site svg { width: 16px; height: 16px; }
  .address { margin-left: 10.5px; flex: 1; font-size: 16.8px; letter-spacing: -.02px; color: #454c41; white-space: nowrap; }
  .address b { font-weight: 400; color: #161b14; }
  .star { width: 20px; height: 20px; }
  .exts { display: flex; align-items: center; margin-left: 22px; }
  .exts svg { width: 22px; height: 22px; }
  .exts svg:nth-of-type(2) { margin-left: 24px; }
  .greenbar { width: 3px; height: 20px; border-radius: 2px; background: #b9efa9; }
  .exts .greenbar { margin: 0 21px; }
  .avatar { width: 25px; height: 25px; border-radius: 50%; background: #a946b8; color: #fff; font-size: 13px; display: grid; place-items: center; margin: 0 21px; }
  .bookmarks { height: 43px; flex: none; background: #f8fcf2; display: grid; align-items: center; padding: 0 0 8px 23px; grid-template-columns: 37px 20px 86px 105px 95px 193px 192px 158px 192px 75px 113px 94px 192px 180px; font-size: 14.6px; letter-spacing: -.2px; color: #42483e; }
  .bm { display: flex; align-items: center; gap: 7px; white-space: nowrap; }
  .bmlabel { margin-top: -2px; }
  .tuf { width: 20px; height: 20px; border-radius: 50%; background: #d81f30; color: #fff; font: italic 700 8px 'Open Sans', sans-serif; letter-spacing: -.3px; display: grid; place-items: center; }
  .dice { width: 20px; height: 20px; background: #cf0a0a; color: #fff; font: italic 800 17px/20px 'Roboto', sans-serif; text-align: center; letter-spacing: 0; }

  /* web page */
  .viewport { flex: 1; display: flex; min-height: 0; }
  .page { width: 1899px; display: flex; flex-direction: column; min-height: 0; }
  header { height: 51px; flex: none; background: #161d26; border-bottom: 1px solid #424650; display: flex; align-items: center; color: #ebebf0; }
  .awslogo { width: 40px; height: 30px; margin: -4px 0 0 21px; }
  .awslogo text { font: 600 18px 'Open Sans', sans-serif; fill: #fff; letter-spacing: 0; }
  .sep { width: 1px; height: 30px; background: #424650; margin: 0 20px; }
  .awssearch { margin-left: 21px; width: 675px; height: 38px; border: 2px solid #656871; border-radius: 10px; background: #0f141a; display: flex; align-items: center; padding: 0 10px 0 14px; color: #b4b4bb; }
  .awssearch em { margin-left: 9px; flex: 1; color: #a4a4ad; letter-spacing: .1px; }
  .awssearch span { color: #a4a4ad; letter-spacing: .4px; }
  .hicons { margin-left: 408px; display: flex; align-items: center; }
  .hicons span { width: 62px; height: 30px; display: grid; place-items: center; border-right: 2px solid #343a44; }
  .hicons span:last-child { width: 61px; }
  .hmenu { font-size: 15px; font-weight: 500; letter-spacing: -.05px; display: flex; align-items: center; white-space: nowrap; }
  .caret { border: 5px solid transparent; border-top: 9px solid #ebebf0; border-bottom: 0; margin-left: 8px; }
  .region { width: 201px; padding-left: 20px; height: 30px; border-right: 1px solid #424650; }
  .account { padding-left: 21px; letter-spacing: .32px; }
  .crumbs { height: 53px; flex: none; border-bottom: 1px solid #b4b4bb; display: flex; align-items: center; padding-left: 20px; background: #fff; }
  .burger { width: 38px; height: 38px; border-radius: 50%; background: #006ce0; display: flex; flex-direction: column; align-items: center; justify-content: center; gap: 4px; margin-right: 15px; }
  .burger i { width: 18px; height: 2.500px; background: #fff; }
  .crumbs a { color: #006ce0; text-decoration: none; border-bottom: 1px solid #006ce0; line-height: 20px; letter-spacing: -.25px; }
  .crumbs .second-crumb { letter-spacing: -.45px; margin-left: 1px; }
  .crumbs b { color: #656871; font-size: 17px; font-weight: 700; letter-spacing: -.18px; margin-top: -1px; }
  .chev { width: 11px; height: 18px; }
  .chev.left { transform: scaleX(-1); }
  .crumbs .chev { margin: 0 15px; color: #8c8c94; width: 10px; }
  .hex { margin-left: auto; width: 68px; height: 30px; border-left: 1px solid #c6c6cd; padding-left: 18px; display: flex; align-items: center; }
  .hex svg { width: 19px; height: 20px; }

  .body { flex: 1; display: flex; min-height: 0; overflow: hidden; }
  .side { width: 329px; overflow: hidden; color: #424650; }
  .sidehead { height: 65px; display: flex; justify-content: space-between; align-items: center; padding: 1px 32px 0 35px; color: #424650; }
  .sidehead b { font-size: 21.800px; font-weight: 700; letter-spacing: -.1px; color: #0f141a; }
  .link { height: 30px; line-height: 28px; padding-left: 35px; letter-spacing: -.16px; display: flex; white-space: nowrap; }
  .link.sub { padding-left: 60px; }
  .link.active { color: #006ce0; font-size: 17px; font-weight: 700; letter-spacing: -.45px; }
  .new { margin: 7px 0 0 10px; height: 20px; line-height: 17px; color: #006ce0; font-size: 14.500px; font-weight: 700; border-bottom: 1.500px dashed #006ce0; letter-spacing: -.3px; }
  .group { display: flex; align-items: center; font-size: 19.200px; font-weight: 700; letter-spacing: -.3px; color: #0f141a; padding-left: 12px; }
  .group.first { height: 36px; padding-top: 2px; }
  .group.second { height: 36px; padding-top: 1px; }
  .group.third { height: 37px; padding-top: 1px; }
  .down { border: 6.500px solid transparent; border-top: 11px solid #0f141a; border-bottom: 0; margin: 1px 10px 0 0; }
  .side-arrow { border: 6.500px solid transparent; border-left: 11px solid #0f141a; border-right: 0; margin: 0 10px 0 2px; }
  .side hr { border: 0; border-top: 1px solid #b4b4bb; margin: 17px 15px 22px 25px; }
  .peek { display: flex; gap: 2px; padding-left: 134px; }
  .peek i { width: 8px; height: 10px; background: #424650; }
  .sidescroll { width: 22px; border-right: 1px solid #b4b4bb; background: #f1f1f1; display: flex; flex-direction: column; align-items: center; padding-top: 9px; }
  .up { border: 5px solid transparent; border-bottom: 5px solid #a3a3a3; border-top: 0; }
  .dn { border: 5px solid transparent; border-top: 6px solid #505050; border-bottom: 0; }
  .sidescroll .thumb { width: 17px; height: 546px; margin-top: 7px; background: #c1c1c1; }
  .sidescroll .dn { margin: auto 0 9px; }
  .pagescroll { width: 19px; background: #f1f1f1; display: flex; flex-direction: column; align-items: center; padding: 9px 0 0 2px; }
  .pagescroll .thumb { width: 17px; height: 771px; margin-top: 7px; background: #c1c1c1; }
  .pagescroll .dn { margin: auto 0 9px; }

  main { flex: 1; padding-left: 20px; padding-right: 20px; min-width: 0; }
  h1, h2, h3, p { margin: 0; }
  .titlebar { height: 69px; display: flex; align-items: flex-start; padding-top: 11px; }
  h1 { font-size: 28.500px; font-weight: 700; line-height: 34px; letter-spacing: -.52px; flex: 1; }
  .updated { font-size: 15px; line-height: 20px; text-align: right; color: #424650; letter-spacing: .06px; margin: -1px 13px 0 0; }
  button { font: 700 17px/28px 'Open Sans', sans-serif; letter-spacing: -.38px; color: #006ce0; border: 2px solid #006ce0; border-radius: 17px; height: 34px; background: #fff; padding: 0 0 1px; margin-left: 10px; display: flex; align-items: center; justify-content: center; gap: 11px; }
  .round { width: 34px; margin-left: 0; padding: 0; }
  .run { width: 142px; }
  .edit { width: 77px; }
  .del { width: 98px; }
  .off { color: #8c8c94; border-color: #b4b4bb; }
  .stop { width: 116px; }
  .logs { width: 254px; letter-spacing: -.12px; }
  .details { width: 178px; letter-spacing: -.25px; }
  .card { border: 1px solid #c6c6cd; border-radius: 20px; width: 1508px; }
  .props { height: 368px; }
  h2 { font-size: 23.700px; font-weight: 700; line-height: 30px; letter-spacing: -.56px; }
  .props h2 { padding: 22px 0 0 25px; height: 53px; }
  .grid { display: grid; grid-template-columns: repeat(4, 374px); margin-left: 5px; line-height: 25px; }
  .grid > div { padding-left: 20px; border-left: 1px solid #b4b4bb; padding-right: 20px; min-height: 75px; }
  .grid > div:first-child { border-color: transparent; }
  .grid b { display: block; font-size: 17px; font-weight: 700; letter-spacing: -.3px; margin-top: -1px; }
  .three { margin-top: 20px; }
  .three > div { min-height: 50px; }
  .blue { color: #006ce0; letter-spacing: -.07px; white-space: nowrap; }
  .blue svg { display: inline-block; vertical-align: -3px; }
  .adv { border-top: 1px solid #b4b4bb; margin-top: 20px; }
  h3 { font-size: 19.200px; font-weight: 700; letter-spacing: -.32px; height: 52px; padding: 0 0 2px 28px; display: flex; align-items: center; }
  .tabs { height: 67px; margin-bottom: 15px; border-bottom: 1px solid #b4b4bb; display: flex; align-items: flex-end; font-size: 19.200px; font-weight: 700; letter-spacing: -.48px; color: #424650; padding-left: 2px; }
  .tabs span { height: 47px; line-height: 24px; padding: 12px 0 0 26px; position: relative; white-space: nowrap; }
  .tabs span:nth-child(1) { width: 167px; padding-left: 24px; }
  .tabs span:nth-child(2) { width: 138px; }
  .tabs span:nth-child(3) { width: 171px; }
  .tabs span:nth-child(4) { width: 146px; }
  .tabs span:not(:last-child)::after { content: ''; position: absolute; right: 0; top: 12px; height: 24px; width: 1px; background: #b4b4bb; }
  .tabs .on { color: #006ce0; border-bottom: 4px solid #006ce0; border-radius: 2px; }
  .runs { border-bottom: 0; border-radius: 20px 20px 0 0; padding: 16px 25px 0 25px; height: 220px; }
  .runshead { display: flex; align-items: center; height: 34px; }
  .runshead h2 { flex: 1; margin-top: -1px; }
  small { font-size: 24px; font-weight: 400; color: #424650; }
  .runs p { height: 33px; line-height: 29px; color: #424650; letter-spacing: -.17px; }
  .filters { display: flex; height: 35px; }
  .field { height: 35px; border: 2px solid #8c8c94; border-radius: 10px; display: flex; align-items: center; color: #656871; }
  .field.main { width: 631px; padding-left: 14px; margin-right: 20px; }
  .field em { letter-spacing: .03px; margin: -2px 0 0 12px; }
  .field .i20 { width: 19px; height: 19px; }
  .date { width: 305px; padding-left: 16px; }
  .field.date em { margin-left: 11px; }
  .pager { margin-left: auto; display: flex; align-items: center; color: #b4b4bb; padding-right: 7px; }
  .pager b { color: #0f141a; font-size: 17px; font-weight: 700; margin: -2px 25px 0; }
  .pref { color: #424650; margin-left: 16px; padding-left: 17px; height: 35px; border-left: 1px solid #b4b4bb; display: flex; align-items: center; }
  .thead, .trow { display: grid; grid-template-columns: 50px 260px 261px 250px 187px 188px 260px; }
  .thead { height: 42px; border-bottom: 1px solid #c6c6cd; padding-top: 12px; color: #424650; font-size: 17px; font-weight: 700; }
  .thead > span { height: 23px; line-height: 20px; border-right: 2px solid #8c8c94; display: flex; align-items: center; justify-content: space-between; padding: 0 16px 1px 20px; letter-spacing: -.25px; white-space: nowrap; }
  .thead > span:first-child { border-color: #b4b4bb; }
  .thead > span:last-child { border-color: transparent; padding-right: 8px; }
  .sorted { color: #0f141a; }
  .thead .sort { width: 14px; height: 12px; }
  .asc { border: 7px solid transparent; border-bottom: 11px solid #0f141a; border-top: 0; }
  .trow { height: 60px; line-height: 55px; }
  .trow > span { padding-left: 20px; white-space: nowrap; overflow: hidden; }
  .trow .radiocell { padding: 18px 0 0 16px; }
  .radio { width: 20px; height: 20px; border: 2px solid #8c8c94; border-radius: 50%; }
  .trow .clip { letter-spacing: 0; }
  .trow .num { text-align: right; padding-right: 21px; }
  .trow .ok { color: #00802f; display: flex; align-items: center; gap: 5px; height: 56px; }
  .trow .changes { line-height: 20px; white-space: normal; padding-top: 7px; }
  footer { height: 38px; flex: none; background: #161d26; border-top: 1px solid #424650; display: flex; align-items: center; padding: 0 20px; color: #ebebf0; font-size: 15px; font-weight: 500; letter-spacing: -.33px; }
  .cs { margin-left: 6px; width: 105px; letter-spacing: -.1px; }
  .copy { margin-left: auto; color: #c6c6cd; font-weight: 400; letter-spacing: -.13px; margin-right: 38px; }
  .f1 { letter-spacing: -.2px; }
  .f2 { margin: 0 31px; }

  /* taskbar */
  .taskbar { height: 58px; flex: none; border-top: 1px solid #a9c4c4; display: flex; align-items: center; background: linear-gradient(90deg, #dcefba 0, #cbf0dc 110px, #c9f0df 330px, #c8eeee 520px, #cdeef1 800px, #c6efee 1100px, #cdeef1 1600px, #c9edee 100%); letter-spacing: -.15px; color: #1b1b1b; }
  .weather { display: flex; width: 447px; padding-left: 25px; align-items: center; gap: 5px; font-size: 14.600px; line-height: 20.500px; }
  .cond { color: #4f5f55; }
  .badged { position: relative; display: block; }
  .wicon { width: 34px; height: 34px; }
  .wbadge { position: absolute; left: 14px; top: -4px; width: 20px; height: 20px; border-radius: 50%; background: #c42b1c; color: #fff; font-size: 13px; line-height: 20px; text-align: center; }
  .kbadge { position: absolute; left: 17px; top: -6px; width: 20px; height: 20px; border-radius: 50%; background: #a946b8; color: #e9cdee; font-size: 12px; line-height: 20px; text-align: center; font-weight: 600; }
  .winlogo { width: 29px; height: 29px; }
  .tsearch { width: 273px; height: 38px; margin-left: 18px; border-radius: 19px; border: 1px solid #b5d8da; background: #f0f9fa; display: flex; align-items: center; padding-left: 13px; color: #5c6364; font-size: 17.500px; }
  .mag { width: 18px; height: 18px; }
  .tsearch span { margin-left: 12px; flex: 1; }
  .scene { width: 64px; height: 26px; margin: 8px 2px 0 0; border-radius: 0 0 14px 0; }
  .apps { display: flex; margin-left: 3px; }
  .app { width: 55px; height: 57px; display: flex; flex-direction: column; align-items: center; justify-content: center; position: relative; }
  .app.open::after { content: ''; position: absolute; bottom: 4px; width: 8px; height: 4px; border-radius: 2px; background: #72827f; }
  .tray { margin-left: auto; display: flex; align-items: center; padding-right: 22px; font-size: 14.600px; line-height: 20.500px; letter-spacing: -.25px; }
  .tchev { width: 14px; height: 9px; }
  .cloud { width: 21px; height: 20px; margin-left: 22px; }
  .lang { margin-left: 24px; width: 30px; text-align: center; }
  .wifi { margin-left: 22px; }
  .vol { margin-left: 10px; }
  .bat { margin-left: 10px; }
  .clock { text-align: right; width: 90px; }
</style>
